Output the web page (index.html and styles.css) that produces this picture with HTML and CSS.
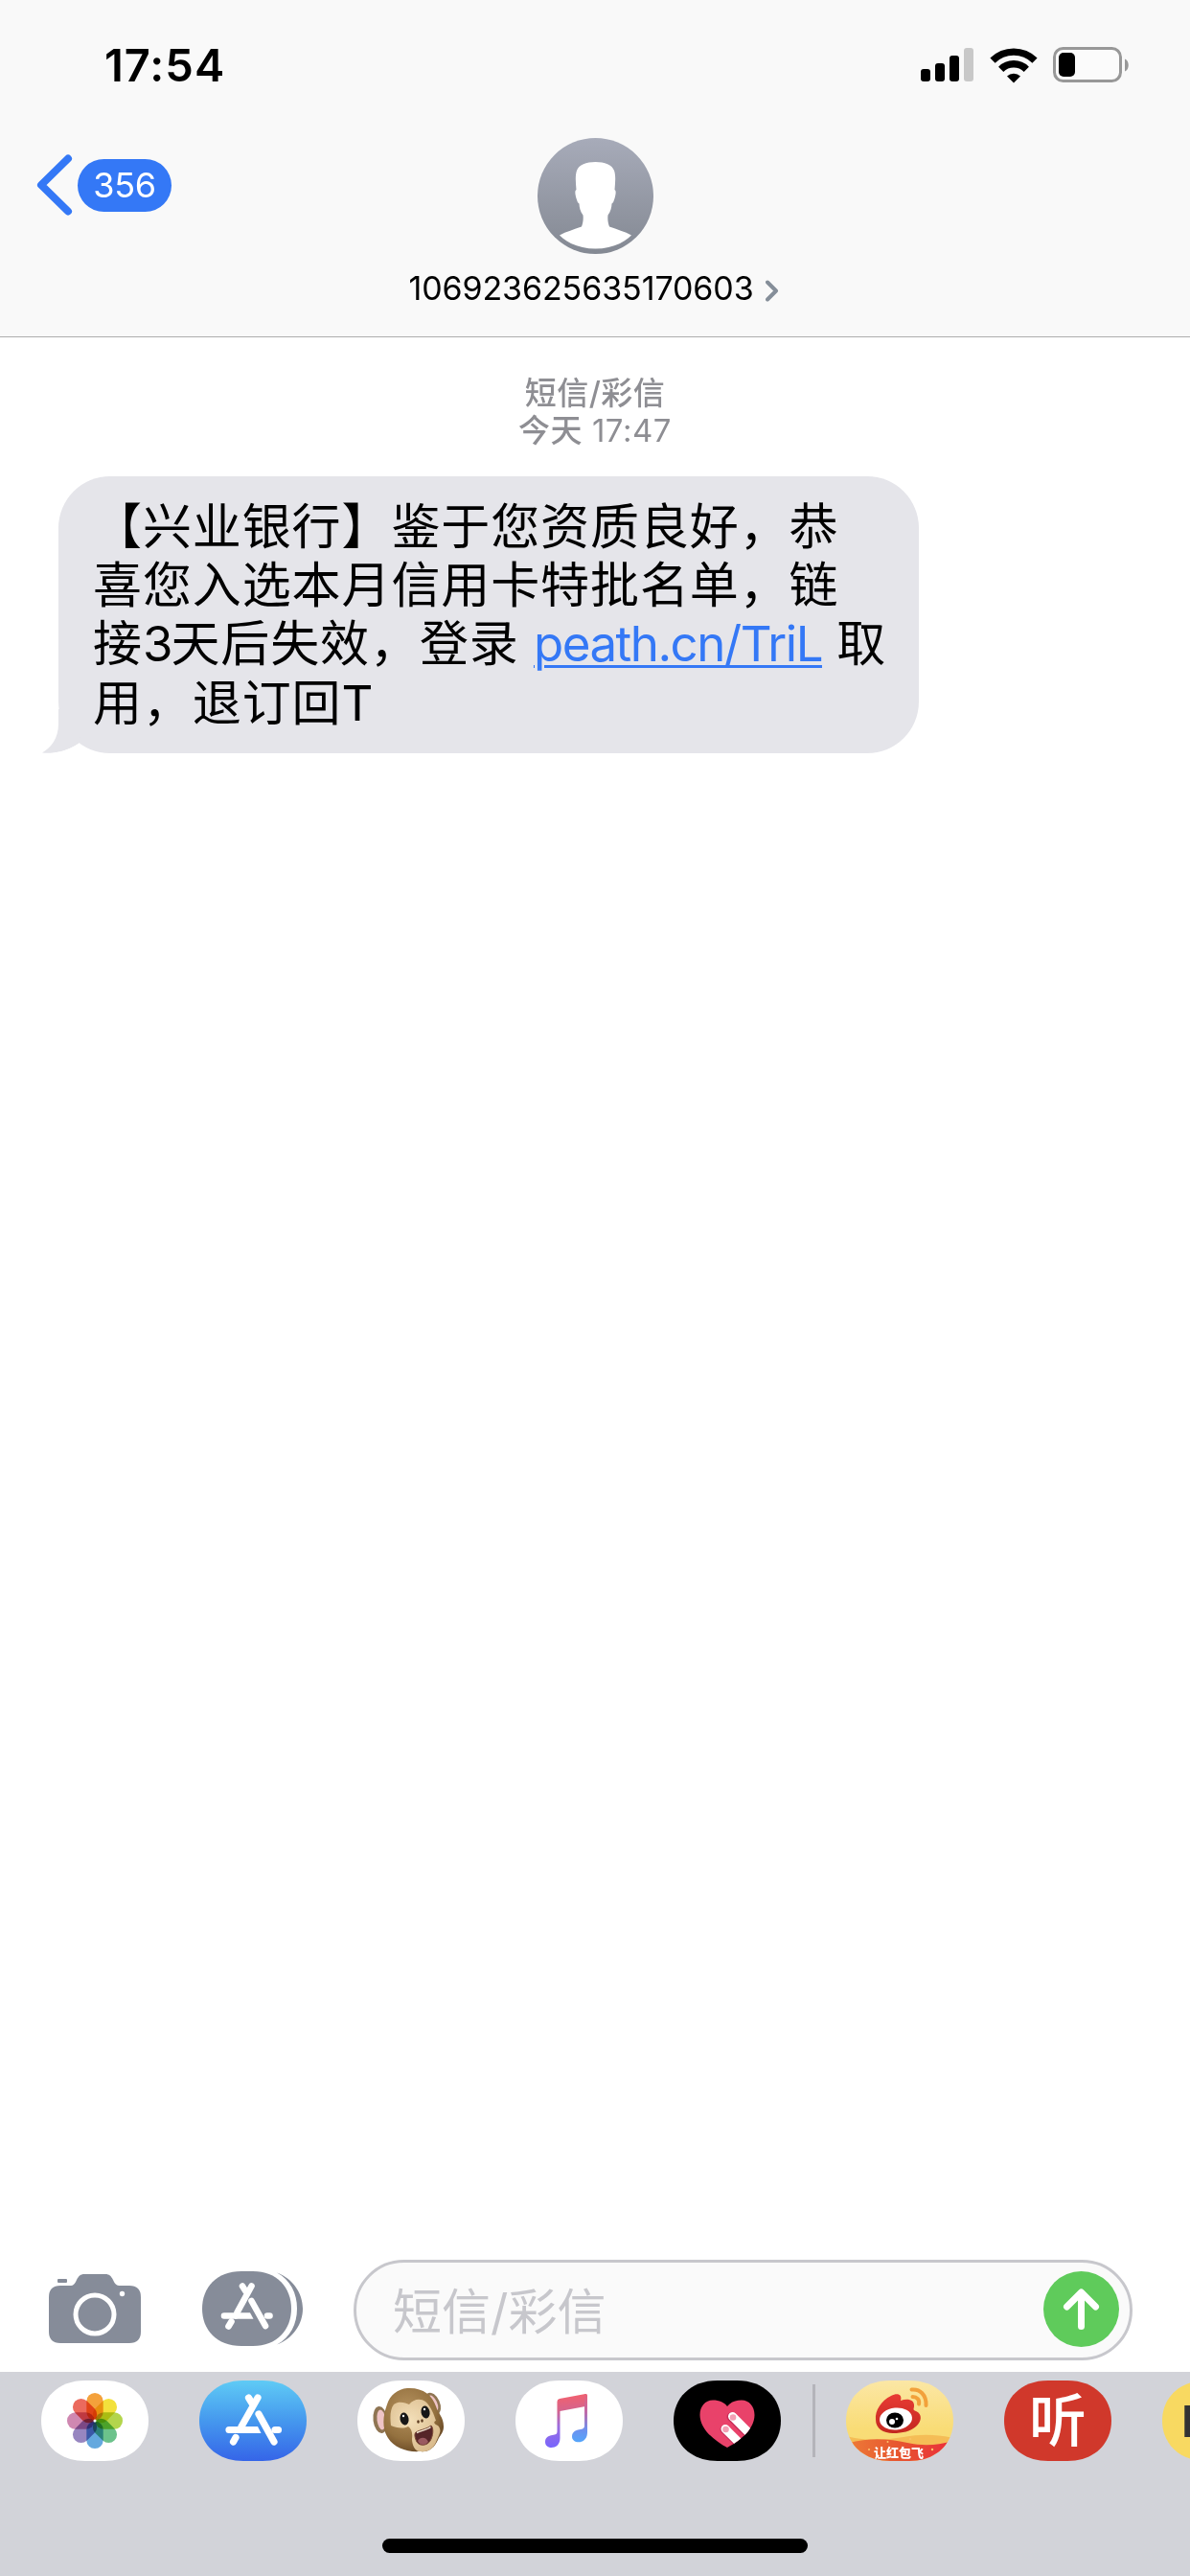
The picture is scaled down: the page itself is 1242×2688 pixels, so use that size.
FILE: index.html
```html
<!DOCTYPE html>
<html lang="zh-CN">
<head>
    <meta charset="UTF-8">
    <meta name="viewport" content="width=device-width, initial-scale=1.0">
    <title>106923625635170603</title>
    <link rel="stylesheet" href="styles.css">
</head>
<body>
    <header class="header">
        <div class="status-bar">
            <span class="time">17:54</span>
            <div class="status-icons">
                <svg class="signal" width="55" height="36" viewBox="0 0 55 36">
                    <rect x="0" y="22" width="10" height="13" rx="3"/>
                    <rect x="15" y="16" width="10" height="19" rx="3"/>
                    <rect x="30" y="8" width="10" height="27" rx="3"/>
                    <rect x="45" y="0" width="10" height="35" rx="3" fill="#c8c8c8"/>
                </svg>
                <svg class="wifi" width="50" height="37" viewBox="0 0 50 37">
                    <g fill="none" stroke="#000" stroke-width="7.4">
                        <path d="M3 13.200a31.300 31.300 0 0 1 44 0"/>
                        <path d="M11.700 22.300a18.800 18.800 0 0 1 26.600 0"/>
                    </g>
                    <path d="M18 29.500a10 10 0 0 1 14 0L25 36.500Z"/>
                </svg>
                <svg class="battery" width="80" height="38" viewBox="0 0 80 38">
                    <rect x="1.500" y="1.500" width="69" height="34" rx="9" fill="#fbfbfb" stroke="#989898" stroke-width="3"/>
                    <rect x="6" y="6" width="17" height="25" rx="5"/>
                    <path d="M75 12.500c5 1.500 5 11.500 0 13Z" fill="#989898"/>
                </svg>
            </div>
        </div>
        <div class="nav">
            <a class="back" href="#">
                <svg width="38" height="64" viewBox="0 0 38 64">
                    <path d="M33 4.500 5 32l28 27.500" fill="none" stroke="#3478f6" stroke-width="8" stroke-linecap="round" stroke-linejoin="round"/>
                </svg>
                <span class="unread">356</span>
            </a>
            <div class="contact">
                <svg class="avatar" width="121" height="121" viewBox="0 0 121 121">
                    <defs>
                        <linearGradient id="avatarBg" x1="0" y1="0" x2="0" y2="1">
                            <stop offset="0" stop-color="#a7abb9"/>
                            <stop offset="1" stop-color="#848993"/>
                        </linearGradient>
                    </defs>
                    <circle cx="60.500" cy="60.500" r="60.500" fill="url(#avatarBg)"/>
                    <path d="M60.500 25C70 25 78 28 80 34c2 6 1 13 .5 20 2 1 1 5 0 9-1 3-1.500 5-3 5.500-.2 4-1 8-4 12-.5 4 0 8 1.500 12 8 3 16 5 23 9-9 9-22 14-37.500 14s-28.500-5-37.500-14c7-4 15-6 23-9 1.500-4 2-8 1.500-12-3-4-3.800-8-4-12-1.500-.5-2-2.500-3-5.500-1-4-2-8 0-9-.5-7-1.500-14 .5-20C43 28 51 25 60.500 25Z" fill="#fff"/>
                </svg>
                <div class="contact-name">
                    <span>106923625635170603</span>
                    <svg width="14" height="23" viewBox="0 0 14 23">
                        <path d="M2 2.500 11 11.500 2 20.500" fill="none" stroke="#858e99" stroke-width="4" stroke-linecap="round" stroke-linejoin="round"/>
                    </svg>
                </div>
            </div>
        </div>
    </header>

    <main class="messages">
        <div class="stamp">
            <div class="stamp-type">短信/彩信</div>
            <div><span class="stamp-day">今天</span> 17:47</div>
        </div>
        <div class="bubble">
            <p>【兴业银行】鉴于您资质良好，恭<br>喜您入选本月信用卡特批名单，链<br>接<span class="latin">3</span>天后失效，登录 <a class="link" href="#">peath.cn/TriL</a> 取<br>用，退订回<span class="latin">T</span></p>
            <svg class="tail" width="42" height="46" viewBox="0 0 42 46">
                <path d="M17 0V15C17 31 9 40 0 45.500 14 47 28 43 38.500 35.500L42 20V0Z" fill="#e5e5ea"/>
                <path d="M0 46C14 47 28 43 38.500 35.500 40 37 41 38 42 38.700V46Z" fill="#fff"/>
            </svg>
        </div>
    </main>

    <div class="compose">
        <svg class="camera" width="96" height="72" viewBox="0 0 96 72">
            <path d="M12 12H22C26 12 27 10 29 6 31 2 33 0 37 0H59C63 0 65 2 67 6 69 10 70 12 75 12H84Q96 12 96 24V60Q96 72 84 72H12Q0 72 0 60V24Q0 12 12 12Z" fill="#868c99"/>
            <rect x="9" y="5" width="10" height="4" rx="1" fill="#868c99"/>
            <circle cx="48" cy="42" r="20" fill="none" stroke="#fff" stroke-width="5"/>
            <circle cx="76.500" cy="20.500" r="2.700" fill="#fff"/>
        </svg>
        <svg class="apps" width="105" height="78" viewBox="0 0 105 78">
            <path d="M41 0H53C78 0 93 17 93 39S78 78 53 78H41C15 78 0 61 0 39S15 0 41 0Z" fill="#868c99"/>
            <path d="M78 1.500C95 8 105 23 105 39S95 70 78 76.500C92 69 99 55 99 39S92 9 78 1.500Z" fill="#868c99"/>
            <g fill="none" stroke="#fff" stroke-width="6.600" stroke-linecap="round">
                <path d="M51.500 15.500 36.500 43M42 15.500 45.500 21M30.500 52.500 27.500 57.500"/>
                <path d="M51.500 31 66 57"/>
                <path d="M23 46.500H35M68 46.500H70.500"/>
            </g>
            <path d="M34 43.200H50L53.500 49.800H34Z" fill="#fff"/>
        </svg>
        <div class="input">
            <span class="placeholder">短信/彩信</span>
            <svg class="send" width="79" height="79" viewBox="0 0 79 79">
                <circle cx="39.500" cy="39.500" r="39.500" fill="#5fcb5b"/>
                <path d="M39.500 57.500V22.500M24.500 37 39.500 22 54.500 37" fill="none" stroke="#fff" stroke-width="7" stroke-linecap="round" stroke-linejoin="round"/>
            </svg>
        </div>
    </div>

    <footer class="drawer">
        <div class="app-strip">
            <!-- Photos -->
            <svg class="app" viewBox="0 0 112 84">
                <defs>
                    <path id="pill" d="M46 0H66C95 0 112 19 112 42S95 84 66 84H46C17 84 0 65 0 42S17 0 46 0Z"/>
                    <clipPath id="pillClip"><use href="#pill"/></clipPath>
                    <rect id="petal" x="-8.700" y="-29" width="17.400" height="28.500" rx="8.700"/>
                </defs>
                <use href="#pill" fill="#fff"/>
                <g class="petals" transform="translate(56 42)">
                    <use href="#petal" fill="#f4a13b"/>
                    <use href="#petal" fill="#f3e13c" transform="rotate(45)"/>
                    <use href="#petal" fill="#b3d54c" transform="rotate(90)"/>
                    <use href="#petal" fill="#6cc28b" transform="rotate(135)"/>
                    <use href="#petal" fill="#64a8de" transform="rotate(180)"/>
                    <use href="#petal" fill="#9786c0" transform="rotate(225)"/>
                    <use href="#petal" fill="#cf88b1" transform="rotate(270)"/>
                    <use href="#petal" fill="#eb6a5d" transform="rotate(315)"/>
                </g>
                <circle cx="56" cy="42" r="1.500" fill="#fff"/>
            </svg>
            <!-- App Store -->
            <svg class="app" viewBox="0 0 112 84">
                <defs>
                    <linearGradient id="storeBg" x1="0" y1="0" x2="0" y2="1">
                        <stop offset="0" stop-color="#5fcbf5"/>
                        <stop offset=".5" stop-color="#4598ee"/>
                        <stop offset="1" stop-color="#3565e8"/>
                    </linearGradient>
                </defs>
                <use href="#pill" fill="url(#storeBg)"/>
                <g fill="none" stroke="#fff" stroke-width="7.200" stroke-linecap="round">
                    <path d="M61 18 44 48M51.500 18 55.500 24.500M38 59.500 35.500 64"/>
                    <path d="M62 35 78 64"/>
                    <path d="M31 51.500H43M79 51.500H82.500"/>
                </g>
                <path d="M42 47.900H61L64.500 55.100H42Z" fill="#fff"/>
            </svg>
            <!-- Animoji -->
            <svg class="app" viewBox="0 0 112 84">
                <defs>
                    <radialGradient id="fur" cx=".4" cy=".35" r=".65">
                        <stop offset="0" stop-color="#b69360"/>
                        <stop offset=".7" stop-color="#94713f"/>
                        <stop offset="1" stop-color="#70502a"/>
                    </radialGradient>
                    <radialGradient id="face" cx=".4" cy=".4" r=".7">
                        <stop offset="0" stop-color="#f3dfb9"/>
                        <stop offset="1" stop-color="#d8b98a"/>
                    </radialGradient>
                </defs>
                <use href="#pill" fill="#fff"/>
                <ellipse cx="24" cy="41" rx="7.500" ry="14" fill="#8f7553" transform="rotate(-7 24 41)"/>
                <ellipse cx="25" cy="41" rx="4.500" ry="10.500" fill="#efc4c6" transform="rotate(-7 25 41)"/>
                <ellipse cx="79" cy="24" rx="7" ry="12" fill="#8f7553" transform="rotate(-24 79 24)"/>
                <ellipse cx="79" cy="24" rx="4.200" ry="9" fill="#efc4c6" transform="rotate(-24 79 24)"/>
                <path d="M52 8C68 7 78 15 82 27 84 34 90 38 90 48 90 55 86 57 84 62 80 71 74 75 65 74 52 75 38 70 32 60 26 51 26 38 31 25 34 15 42 9 52 8Z" fill="url(#fur)"/>
                <path d="M35 47C34 39 34 30 38 25 43 21 50 23 54 25 58 20 65 18 71 22 77 27 80 36 82 42 79 43 80 46 84 47 89 52 85 57 83 62 80 71 74 75 65 74 60 74 57 67 57 61 58 54 56 50 53 48 47 51 40 49 35 47Z" fill="url(#face)"/>
                <ellipse cx="49" cy="40" rx="4.500" ry="6.500" fill="#171717" transform="rotate(-10 49 40)"/>
                <ellipse cx="71" cy="33" rx="4.500" ry="6.500" fill="#171717" transform="rotate(-10 71 33)"/>
                <circle cx="48" cy="37" r="1.200" fill="#fff"/>
                <circle cx="70" cy="30" r="1.200" fill="#fff"/>
                <ellipse cx="63.500" cy="43" rx="1.300" ry="1.800" fill="#5d3d22"/>
                <ellipse cx="67.500" cy="42" rx="1.300" ry="1.800" fill="#5d3d22"/>
                <path d="M61 54C66 51 72 51 77 47 80 50 79 58 76 63 73 68 65 69 62 64 60 60 59 56 61 54Z" fill="#552528" stroke="#7c4b36"/>
                <path d="M63 63C66 58 72 59 74 64 71 68 65 68 63 63Z" fill="#9a5a60"/>
                <path d="M62 54.500C67 52 73 51.500 76.500 48.500" fill="none" stroke="#f2e8d4" stroke-width="1.500"/>
            </svg>
            <!-- Music -->
            <svg class="app" viewBox="0 0 112 84">
                <defs>
                    <linearGradient id="note" gradientUnits="userSpaceOnUse" x1="50" y1="14" x2="54" y2="70">
                        <stop offset="0" stop-color="#f5606b"/>
                        <stop offset=".3" stop-color="#d5648c"/>
                        <stop offset=".6" stop-color="#9b6ee0"/>
                        <stop offset="1" stop-color="#7564ff"/>
                    </linearGradient>
                    <linearGradient id="noteSide" gradientUnits="userSpaceOnUse" x1="70" y1="14" x2="70" y2="64">
                        <stop offset="0" stop-color="#ea6175"/>
                        <stop offset=".4" stop-color="#bd6aab"/>
                        <stop offset=".75" stop-color="#6d91ef"/>
                        <stop offset="1" stop-color="#55a5fa"/>
                    </linearGradient>
                </defs>
                <use href="#pill" fill="#fff"/>
                <path d="M43.500 22Q43.500 19.500 46 19L73 14V27L46.500 32V60C46.500 67 42 70 37.500 70 33.500 70 31 67.500 31 64 31 59.500 34.500 57.500 38.500 57 42 56.500 43.500 56 43.500 53Z" fill="url(#note)"/>
                <path d="M72 14.200 73.500 14Q75 13.800 75 15.500V54C75 61 70.500 64.300 66 64.300 62 64.300 59 62 59 58.500 59 54 62.500 52 66.500 51.300 70.500 50.700 72 50 72 47Z" fill="url(#noteSide)"/>
            </svg>
            <!-- Digital Touch -->
            <svg class="app" viewBox="0 0 112 84">
                <defs>
                    <clipPath id="heartClip">
                        <path id="heart" d="M56 70C43 63 27.500 51 27.500 36 27.500 27 33 20.500 41 20.500 48 20.500 53 23 56 27 59 23 64 20.500 71 20.500 79 20.500 84.500 27 84.500 36 84.500 51 69 63 56 70Z"/>
                    </clipPath>
                </defs>
                <use href="#pill"/>
                <use href="#heart" fill="#e9426a"/>
                <g clip-path="url(#heartClip)" stroke-linecap="round" stroke-width="9">
                    <path d="M60 38 88 66M53 51 80 78" stroke="#c92f59"/>
                    <path d="M61.500 37.500 88 64M54 50.500 80 76.500" stroke="#fff"/>
                </g>
                <circle cx="62" cy="38.500" r="3.300" fill="#f3a0b5"/>
                <circle cx="54.500" cy="51" r="3.300" fill="#f3a0b5"/>
            </svg>
            <span class="divider"></span>
            <!-- Weibo -->
            <svg class="app" viewBox="0 0 112 84">
                <defs>
                    <linearGradient id="sand" x1="0" y1="0" x2="0" y2="1">
                        <stop offset="0" stop-color="#fbe7a5"/>
                        <stop offset=".6" stop-color="#f9dc76"/>
                    </linearGradient>
                    <linearGradient id="ribbon" x1="0" y1="0" x2="1" y2="0">
                        <stop offset="0" stop-color="#ed7c38"/>
                        <stop offset=".5" stop-color="#e7552f"/>
                        <stop offset="1" stop-color="#ea2b3c"/>
                    </linearGradient>
                    <linearGradient id="flame" x1="0" y1="0" x2="0" y2="1">
                        <stop offset="0" stop-color="#e83b34"/>
                        <stop offset="1" stop-color="#c32820"/>
                    </linearGradient>
                </defs>
                <g clip-path="url(#pillClip)">
                    <rect width="112" height="84" fill="url(#sand)"/>
                    <path d="M0 58C22 64 42 62 60 59 78 56 93 56 112 60V72H0Z" fill="#f5bd56"/>
                    <path d="M0 66C24 59 45 61 64 65 83 69 97 67 112 63V84H0Z" fill="url(#ribbon)"/>
                </g>
                <path d="M31 41C30 31 37 21 47 16 54 12 59 15 57 21 64 18 72 20 71 27 71 29 69 31 73 32 80 35 79 43 73 48 67 53 59 55 49 55 39 55 31 50 31 41Z" fill="url(#flame)"/>
                <ellipse cx="52" cy="40" rx="17" ry="11.500" fill="#fff" transform="rotate(-5 52 40)"/>
                <ellipse cx="51" cy="41.500" rx="9" ry="8"/>
                <circle cx="48" cy="43" r="3" fill="#fff"/>
                <circle cx="53" cy="40" r="1.300" fill="#fff"/>
                <path d="M68.500 9.500C77 8.500 84 15 83.500 26M69.500 17C74 17 77 20 76 24.500" fill="none" stroke="#f2a13b" stroke-width="4" stroke-linecap="round"/>
                <g fill="#fac46a">
                    <circle cx="43.500" cy="64" r="1"/>
                    <circle cx="67" cy="61" r="1"/>
                    <circle cx="24" cy="72" r="1"/>
                    <circle cx="90" cy="72" r="1.200"/>
                </g>
                <text class="ribbon-text" x="55" y="80" text-anchor="middle">让红包飞</text>
            </svg>
            <!-- Radio -->
            <svg class="app" viewBox="0 0 112 84">
                <use href="#pill" fill="#d0382b"/>
                <text class="listen-text" x="56" y="64" text-anchor="middle">听</text>
            </svg>
            <svg class="app" viewBox="0 0 112 84">
                <use href="#pill" fill="#f8d961"/>
                <text class="letter-text" x="20" y="59">H</text>
            </svg>
        </div>
        <div class="home-indicator"></div>
    </footer>
</body>
</html>
```
FILE: styles.css
```css
* {
    box-sizing: border-box;
}
body {
    width: 1242px;
    height: 2688px;
    margin: 0;
    overflow: hidden;
    display: flex;
    flex-direction: column;
    background: #fff;
    color: #000;
    font-family: Inter, "Noto Sans CJK SC", sans-serif;
}
svg {
    display: block;
    flex-shrink: 0;
}
a {
    text-decoration: none;
}

/* header */
.header {
    height: 352px;
    background: #f9f9f9;
    border-bottom: 1px solid #adadad;
}
.status-bar {
    display: flex;
    justify-content: space-between;
    align-items: center;
    height: 136px;
    padding: 0 63px 0 109px;
}
.time {
    margin-bottom: 2px;
    font-size: 47px;
    font-weight: 600;
    letter-spacing: 1px;
}
.status-icons {
    display: flex;
    align-items: center;
}
.wifi {
    margin-left: 17px;
}
.battery {
    margin-left: 16px;
}
.nav {
    display: grid;
    grid-template-columns: 1fr 400px 1fr;
    padding: 8px 38px 0;
}
.back {
    display: flex;
    align-items: center;
    gap: 5px;
    height: 64px;
    margin-top: 17px;
}
.unread {
    width: 98px;
    height: 55px;
    border-radius: 28px;
    background: #3478f6;
    color: #fff;
    font-size: 36px;
    line-height: 54px;
    text-align: center;
    letter-spacing: -0.3px;
}
.contact {
    display: flex;
    flex-direction: column;
    align-items: center;
}
.contact-name {
    display: flex;
    align-items: center;
    gap: 12px;
    height: 40px;
    margin-top: 15px;
    margin-right: 3px;
    font-size: 34px;
    white-space: nowrap;
    letter-spacing: -0.1px;
}
.contact-name svg {
    margin-top: 6px;
}

/* conversation */
.messages {
    flex: 1;
    padding: 39px 61px 0;
}
.stamp {
    height: 106px;
    color: #8e8e93;
    font-size: 33px;
    line-height: 39px;
    letter-spacing: 0.5px;
    text-align: center;
}
.stamp-type,
.stamp-day {
    font-weight: 500;
}
.bubble {
    position: relative;
    width: 898px;
    height: 289px;
    padding: 22px 0 0 36px;
    border-radius: 54px;
    background: #e5e5ea;
}
.bubble p {
    margin: 0;
    font-size: 51px;
    line-height: 61.2px;
    letter-spacing: 0.9px;
    white-space: nowrap;
}
.latin {
    letter-spacing: -2px;
}
.link {
    color: #3478f6;
    letter-spacing: -1.5px;
    text-decoration: underline;
    text-decoration-thickness: 3px;
    text-underline-offset: 4px;
}
.tail {
    position: absolute;
    left: -17px;
    bottom: 0;
}

/* compose row */
.compose {
    display: flex;
    height: 117px;
    padding-left: 51px;
}
.camera {
    margin-top: 15px;
}
.apps {
    margin: 12px 53px 0 64px;
}
.input {
    display: flex;
    align-items: center;
    justify-content: space-between;
    width: 813px;
    height: 105px;
    padding: 0 11px 0 38px;
    border: 3px solid #c7c7cc;
    border-radius: 53px;
    background: #fafafa;
}
.placeholder {
    margin-bottom: 4px;
    color: #c7c7cc;
    font-size: 51px;
}
.send {
    margin-bottom: 3px;
}

/* app drawer */
.drawer {
    height: 213px;
    background: #d2d3d9;
}
.app-strip {
    display: flex;
    align-items: center;
    gap: 53px;
    height: 102px;
    padding-left: 43px;
    overflow: hidden;
}
.app {
    width: 112px;
    height: 84px;
}
.divider {
    flex-shrink: 0;
    width: 3px;
    height: 76px;
    margin: 0 -21px 0 -20px;
    background: #b4b4ba;
}
.petals use {
    mix-blend-mode: multiply;
}
.ribbon-text {
    fill: #fff;
    font-family: "Noto Sans CJK SC", sans-serif;
    font-size: 13px;
    font-weight: 900;
}
.listen-text {
    fill: #fff;
    font-family: "Noto Sans CJK SC", sans-serif;
    font-size: 60px;
    font-weight: 500;
}
.letter-text {
    fill: #333;
    font-size: 45px;
    font-weight: 600;
}
.home-indicator {
    width: 444px;
    height: 15px;
    margin: 72px auto 0;
    border-radius: 8px;
    background: #000;
}
```
